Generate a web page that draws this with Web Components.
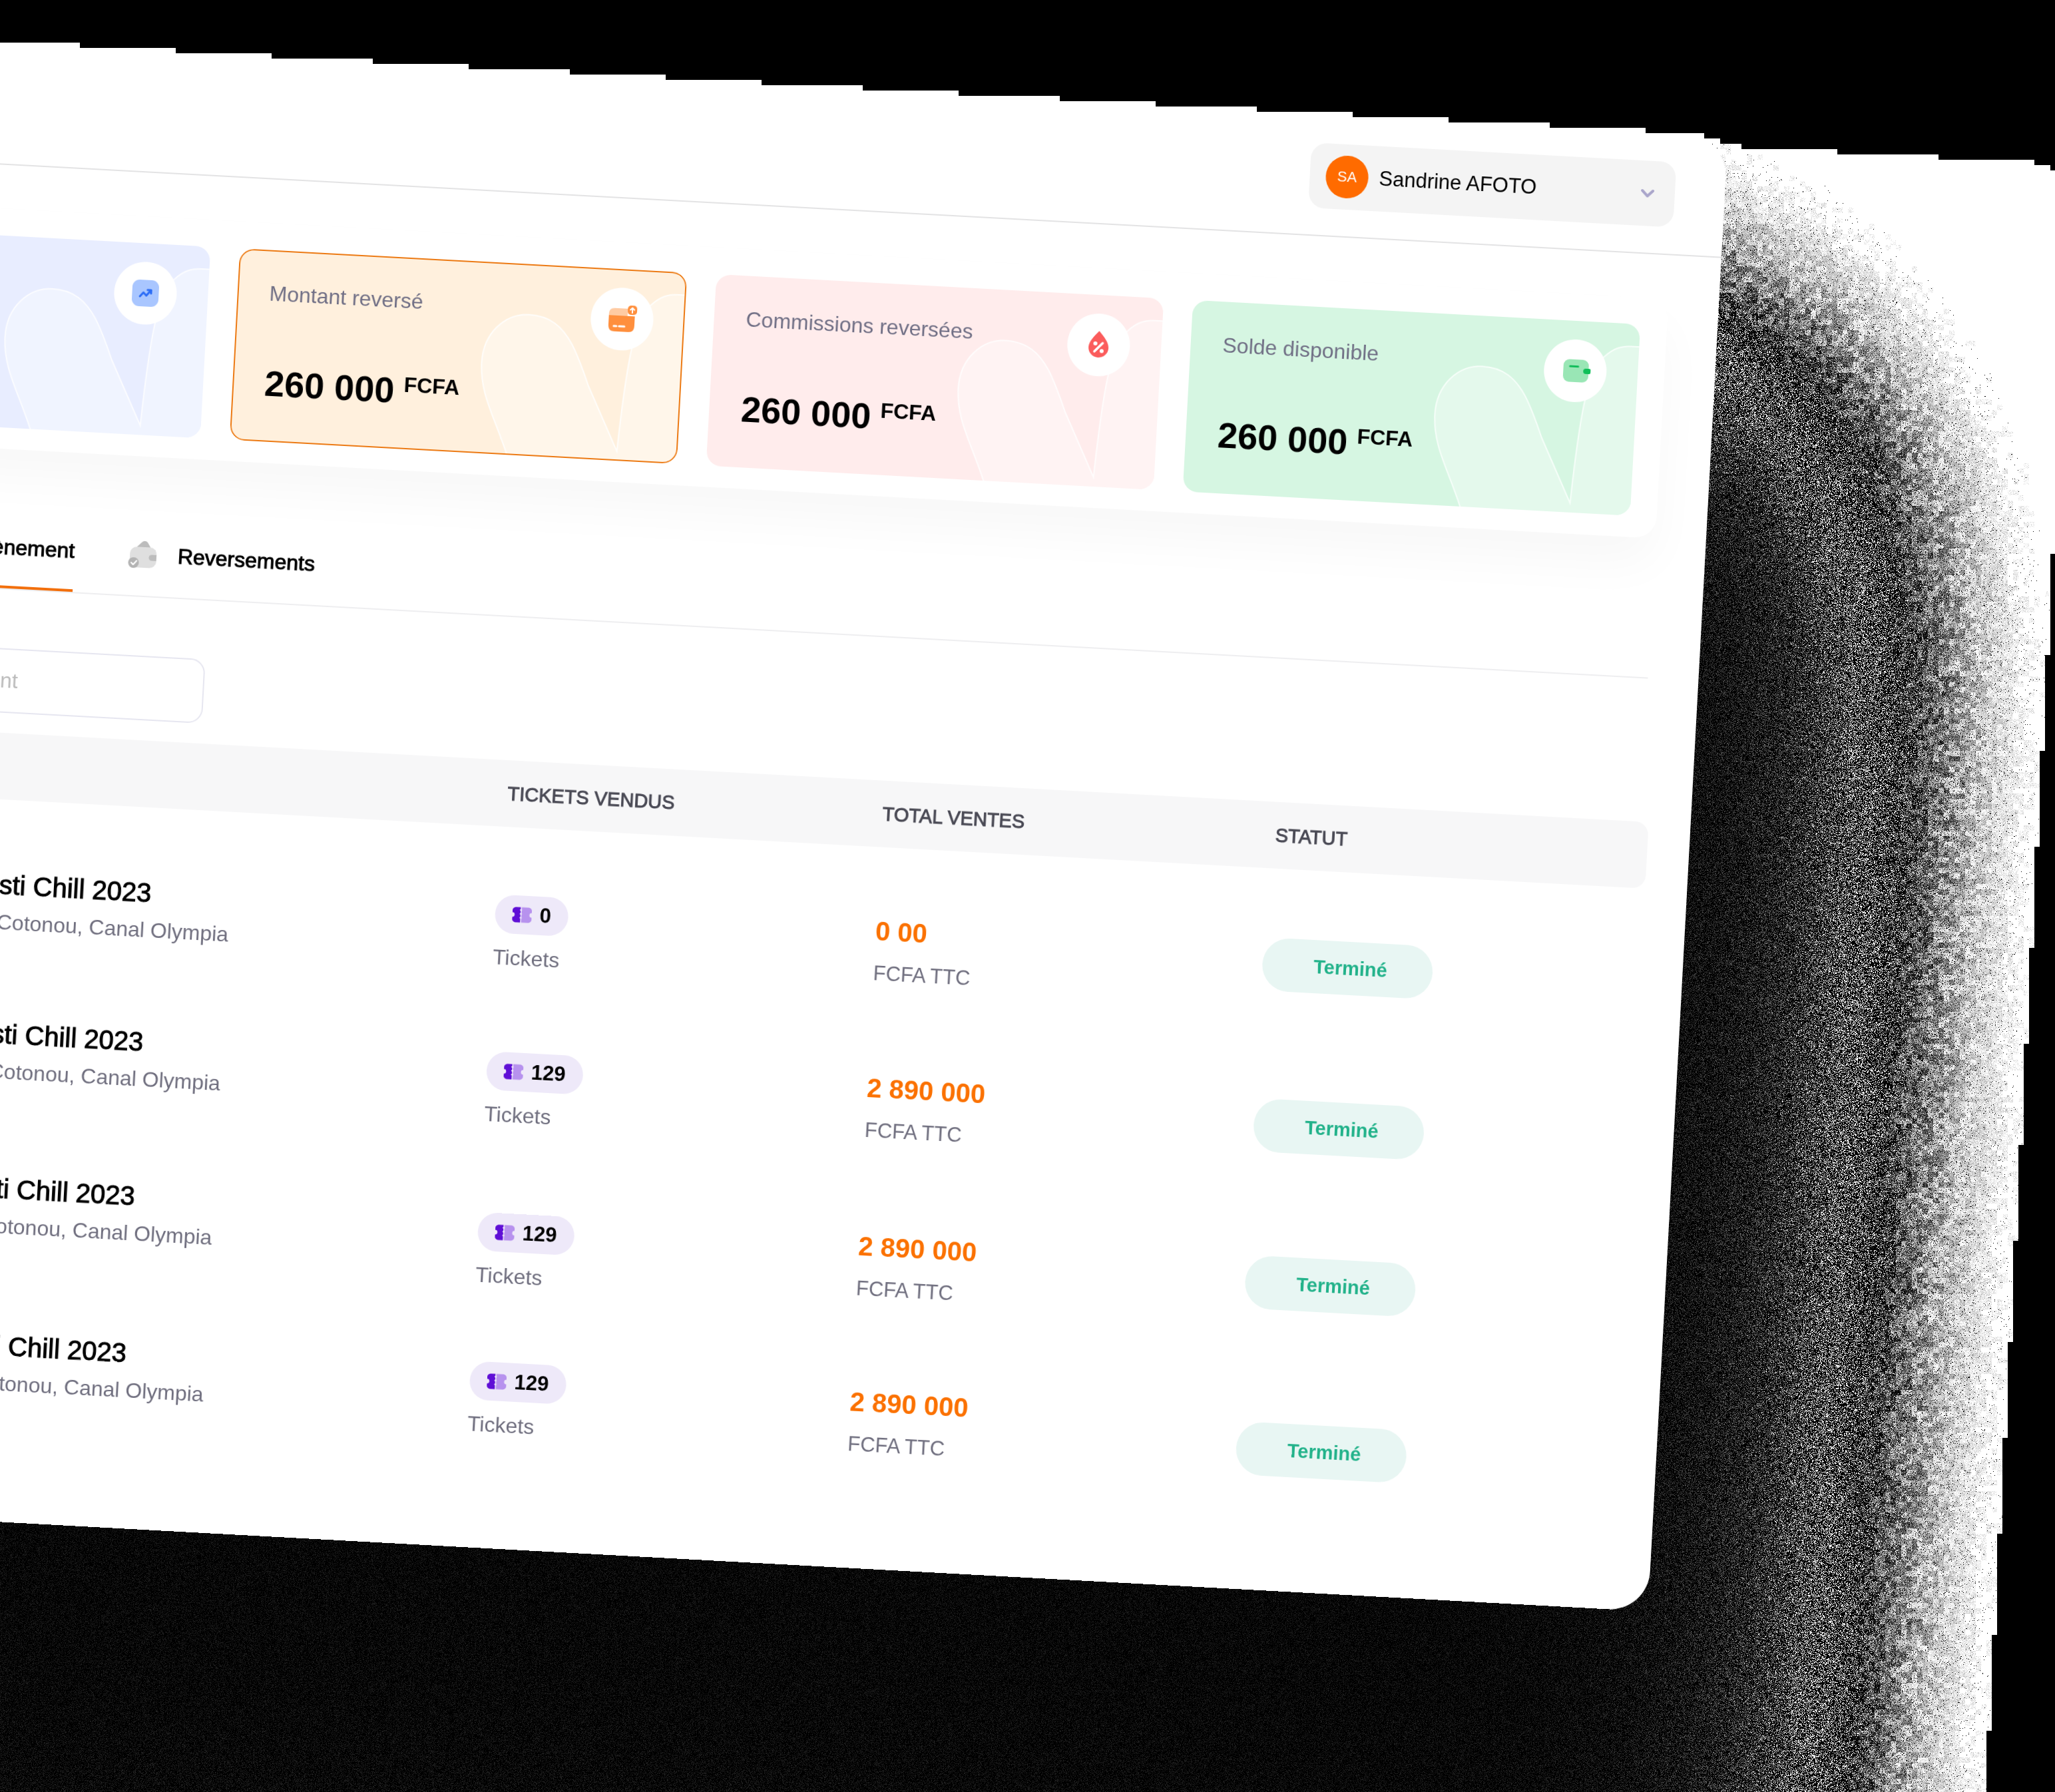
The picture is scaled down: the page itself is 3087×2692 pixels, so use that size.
<!DOCTYPE html>
<html lang="fr">
<head>
<meta charset="utf-8">
<title>Reversements</title>
<style>
  html, body { margin: 0; background: #000; overflow: hidden; }
  body { font-family: "Liberation Sans", Arial, sans-serif; font-size: 32px; line-height: 40px; color: #000; }
</style>
</head>
<body>
<tilted-stage>
  <account-bar slot="header" initials="SA">Sandrine AFOTO</account-bar>
  <stat-board>
    <stat-card tone="blue" icon="trend"><span slot="label">Montant total</span>260 000</stat-card>
    <stat-card tone="orange" icon="card"><span slot="label">Montant reversé</span>260 000</stat-card>
    <stat-card tone="red" icon="drop"><span slot="label">Commissions reversées</span>260 000</stat-card>
    <stat-card tone="green" icon="wallet"><span slot="label">Solde disponible</span>260 000</stat-card>
  </stat-board>
  <tab-bar></tab-bar>
  <search-box></search-box>
  <event-table></event-table>
</tilted-stage>

<script>
const ICONS = {
  trend: `<svg width="46" height="46" viewBox="0 0 46 46"><rect x="3" y="3" width="40" height="40" rx="11" fill="#a9c6ff"/><path d="M15 28 L20 22 L24.500 26.500 L30 19.500 M26 18 L31.500 18 L31.500 23" fill="none" stroke="#2b6cf6" stroke-width="3" stroke-linecap="round" stroke-linejoin="round"/></svg>`,
  card: `<svg width="46" height="46" viewBox="0 0 46 46"><path d="M3 19v-3c0-6 3-9 9-9h19v12z" fill="#ffcba3"/><path d="M3 18h39v14c0 7-3 10-9 10H12c-6 0-9-3-9-10z" fill="#ff8f3d"/><rect x="31" y="2" width="14" height="14" rx="5" fill="#ff8f3d"/><path d="M38 13V6M35 8.500l3-3 3 3" fill="none" stroke="#fff" stroke-width="2" stroke-linecap="round" stroke-linejoin="round"/><path d="M11 34h4M19 34h8" stroke="#fff" stroke-width="3" stroke-linecap="round"/></svg>`,
  drop: `<svg width="46" height="46" viewBox="0 0 46 46"><path d="M23 2C16 10 8 18 8 27a15 15 0 0 0 30 0C38 18 30 10 23 2z" fill="#fb5c5c"/><path d="M17 33L29 20" stroke="#fff" stroke-width="3.500" stroke-linecap="round"/><circle cx="18" cy="21" r="3" fill="#fff"/><circle cx="28" cy="32" r="3" fill="#fff"/></svg>`,
  wallet: `<svg width="46" height="46" viewBox="0 0 46 46"><rect x="5" y="6" width="38" height="34" rx="9" fill="#99e6b5"/><path d="M15 16.500h12" stroke="#12bd5b" stroke-width="3" stroke-linecap="round"/><path d="M39 19h5a2 2 0 0 1 2 2v4a2 2 0 0 1-2 2h-5a4 4 0 0 1 0-8z" fill="#0fbf58"/></svg>`,
  purse: `<svg width="42" height="42" viewBox="0 0 42 42"><path d="M11 11L19 3c3-3 6-3 9 0l5 8z" fill="#bcbcbc"/><rect x="2" y="10" width="40" height="31" rx="10" fill="#dfdfdf"/><path d="M35 21h7v9h-7a4.500 4.500 0 0 1 0-9z" fill="#bdbdbd"/><circle cx="8" cy="34" r="8" fill="#b3b3b3"/><path d="M4.500 34l3 3 5-6" fill="none" stroke="#fff" stroke-width="2" stroke-linecap="round" stroke-linejoin="round"/></svg>`,
  ticket: `<svg width="29" height="24" viewBox="0 0 30 24"><path d="M6 0h6.500v3l-1.500 1.500 1.500 1.500v3l-1.500 1.500L12.500 12v3L11 16.500l1.500 1.500V24H6c-3 0-6-2-6-5v-3.500a3.500 3.500 0 0 0 0-7V5c0-3 3-5 6-5z" fill="#5f0fd6"/><path d="M24 0H14v3l1 1.500-1 1.500v3l1 1.500-1 1.500v3l1 1.500-1 1.500V24h10c3 0 6-2 6-5v-3.500a3.500 3.500 0 0 1 0-7V5c0-3-3-5-6-5z" fill="#b792ee"/></svg>`,
  chevron: `<svg width="24" height="16" viewBox="0 0 24 16"><path d="M4 4l8 8 8-8" fill="none" stroke="#aaa6cb" stroke-width="4" stroke-linecap="round" stroke-linejoin="round"/></svg>`
};

function define(name, render, ready) {
  customElements.define(name, class extends HTMLElement {
    connectedCallback() {
      if (this.shadowRoot) return;
      const root = this.attachShadow({ mode: 'open' });
      root.innerHTML = render(this);
      if (ready) ready(root, this);
    }
  });
}

/* Dithered shadow cast by the tilted panel: its faint alpha is quantised per pixel,
   and blocks of 8 pixels share one tone where it fades away. */
define('grain-shadow', () => `
  <style>:host { display: block; } canvas { display: block; width: 100%; height: 100%; }</style>
  <canvas aria-hidden="true"></canvas>`, root => {
  const cv = root.querySelector('canvas');
  const W = cv.width = innerWidth, H = cv.height = innerHeight;
  const ctx = cv.getContext('2d');
  const img = ctx.createImageData(W, H);
  const px = new Uint32Array(img.data.buffer);
  let s = 20231;
  const rnd = () => { s ^= s << 13; s ^= s >>> 17; s ^= s << 5; return (s >>> 0) / 4294967296; };
  const t = 3.11 * Math.PI / 180, C = Math.cos(t), S = Math.sin(t);
  const edge = W - 484, panelTop = 66, panelBottom = 2283, sigma = 185, sigmaTop = 200;
  const phi = z => {
    const k = 1 / (1 + 0.2316419 * Math.abs(z));
    const q = 0.3989423 * Math.exp(-z * z / 2) * k * (0.3193815 + k * (-0.3565638 + k * (1.781478 + k * (-1.821256 + k * 1.330274))));
    return z > 0 ? 1 - q : q;
  };
  const gray = v => (255 << 24 | v << 16 | v << 8 | v) >>> 0;
  for (let by = 0; by < H; by += 8) for (let bx = 0; bx < W; bx += 8) {
    const u = bx * C + by * S, vb = (by + 8) * C - bx * S;
    const inPanel = u < edge - 11 && vb > (u < edge - 36 ? 65.75 : u < edge - 19 ? 72 : 80);
    const inShadow = vb > (u > edge + 485 ? 92 : 82.05) && u < edge + 517.5;
    let tone = 255, a = 0;
    if (inShadow) {
      const um = u + 4, vm = vb - 4;
      a = 12.8 * phi((edge - um) / sigma) * phi((vm - panelTop - 539) / sigmaTop) * phi((panelBottom + 539 - vm) / sigma);
      a = Math.max(0, a - 0.022);
      const f = a / 0.58;
      tone = Math.max(8, Math.min(254, 255 * (1 - f) + (rnd() - 0.55) * 150 * Math.min(1, f * 3)));
      if (f > 1.3) tone = 0;
      if (rnd() > a * 22) tone = 255;
    }
    const on = inPanel || inShadow;
    for (let y = by; y < by + 8 && y < H; y++) for (let x = bx; x < bx + 8 && x < W; x++) {
      let v = 0;
      if (on) {
        const n = Math.floor(a * (0.6 + 0.8 * rnd()) + rnd());
        if (n > 0) v = rnd() < 0.38 ? 255 / n : 0;
        else v = tone === 255 ? 255 : Math.max(0, Math.min(255, tone + (rnd() - 0.5) * 80));
      }
      px[y * W + x] = gray(v | 0);
    }
  }
  ctx.putImageData(img, 0, 0);
});

define('tilted-stage', () => `
  <style>
    :host { display: grid; height: 100vh; overflow: hidden; }
    grain-shadow, .plane { grid-area: 1 / 1; min-width: 0; min-height: 0; }
    .plane { padding-top: 66px; transform: rotate(3.105deg); transform-origin: 0 0; }
    .panel { width: calc(100vw - 87px); margin-left: -397px; background: #fff; border-radius: 60px; }
    main { padding: 66px 76px 140px 20px; }
  </style>
  <grain-shadow></grain-shadow>
  <div class="plane"><div class="panel">
    <slot name="header"></slot>
    <main><slot></slot></main>
  </div></div>`);

define('account-bar', el => `
  <style>
    :host { display: flex; justify-content: flex-end; align-items: center; height: 179px; padding-right: 75px; border-bottom: 2px solid #e3e3e4; }
    button { display: flex; align-items: center; gap: 16px; width: 549px; height: 98px; padding: 0 29px 0 24px; border: 0; border-radius: 24px; background: #f4f4f4; font: 31px/40px "Liberation Sans", Arial, sans-serif; color: #000; text-align: left; }
    .avatar { display: grid; place-items: center; width: 64px; height: 64px; border-radius: 50%; background: #ff6b00; color: #fff; font-size: 22px; }
    .name { flex: 1; }
    svg { display: block; }
  </style>
  <button type="button" aria-haspopup="menu"><span class="avatar">${el.getAttribute('initials')}</span><span class="name"><slot></slot></span>${ICONS.chevron}</button>`);

define('stat-board', () => `
  <style>
    :host { display: grid; grid-template-columns: repeat(4, minmax(0, 1fr)); gap: 44px; padding: 40px 40px 32px; border-radius: 32px; background: #fff; box-shadow: 0 40px 72px rgba(0, 0, 0, .03); }
  </style>
  <slot></slot>`);

const TONES = {
  blue: ['#e8edff', '#f0f4ff', '#fbfcff', 'transparent'],
  orange: ['#fff0dd', '#fff6ea', '#fffdfa', '#ec7a14'],
  red: ['#ffecec', '#fff3f3', '#fffcfc', 'transparent'],
  green: ['#d6f6e2', '#e4f9ec', '#f6fef9', 'transparent']
};
define('stat-card', el => {
  const [bg, wave, line, border] = TONES[el.getAttribute('tone')];
  return `
  <style>
    :host { display: grid; height: 288px; border-radius: 22px; overflow: hidden; background: ${bg}; }
    .wave, .body, .ring { grid-area: 1 / 1; }
    .wave { display: block; justify-self: end; width: 310px; height: 288px; }
    .ring { border: 2px solid ${border}; border-radius: 22px; }
    .body { display: flex; justify-content: space-between; padding: 28px 47px 0 48px; }
    .text { display: flex; flex-direction: column; gap: 85px; padding-top: 17px; }
    .label { color: #706f85; font-size: 32px; line-height: 40px; white-space: nowrap; }
    .amount { font-weight: 700; font-size: 54px; line-height: 60px; white-space: nowrap; }
    sup { margin-left: 14px; font-size: 32px; line-height: 0; vertical-align: 17px; }
    .badge { display: grid; place-items: center; width: 94px; height: 94px; border-radius: 50%; background: #fff; }
    svg { display: block; }
  </style>
  <svg class="wave" viewBox="363 0 310 288" aria-hidden="true"><path d="M418 290C396 232 372 200 372 152C372 106 404 76 439 76C471 76 490 91 506 117C516 134 526 158 534 178L582 274C585 220 589 160 596 118C602 84 609 62 622 51C634 39 645 34 662 34H700V310H426Z" fill="${wave}" stroke="${line}" stroke-width="2"/></svg>
  <div class="ring"></div>
  <div class="body">
    <div class="text"><div class="label"><slot name="label"></slot></div><div class="amount"><slot></slot><sup>FCFA</sup></div></div>
    <div class="badge">${ICONS[el.getAttribute('icon')]}</div>
  </div>`;
});

define('tab-bar', () => `
  <style>
    :host { display: block; margin-top: 106px; }
    nav { display: flex; gap: 81px; padding-left: 298px; border-bottom: 2px solid #eeeef0; }
    button { display: flex; align-items: center; gap: 32px; padding: 20px 0 37px; border: 0; border-bottom: 4px solid transparent; background: none; font: 32px/40px "Liberation Sans", Arial, sans-serif; color: #000; -webkit-text-stroke: 1px #000; }
    button[aria-current] { border-bottom-color: #f26f0c; }
    svg { display: block; }
  </style>
  <nav>
    <button type="button" aria-current="page">${ICONS.purse}Évènement</button>
    <button type="button">${ICONS.purse}Reversements</button>
  </nav>`);

define('search-box', () => `
  <style>
    :host { display: block; margin-top: 88px; }
    input { display: block; box-sizing: border-box; width: 739px; height: 97px; padding: 0 24px 0 80px; border: 2px solid #e6e6f0; border-radius: 22px; background: #fff; font: 32px/40px "Liberation Sans", Arial, sans-serif; color: #000; outline: 0; }
    input::placeholder { color: #bbb; opacity: 1; }
  </style>
  <input type="search" aria-label="Rechercher un évènement" placeholder="Rechercher un évènement">`);

const EVENTS = [
  { sold: '0', total: '0 00' },
  { sold: '129', total: '2 890 000' },
  { sold: '129', total: '2 890 000' },
  { sold: '129', total: '2 890 000' }
];
define('event-table', () => `
  <style>
    :host { display: block; margin: 30px -13px 0 0; }
    table { width: 100%; table-layout: fixed; border-collapse: separate; border-spacing: 0; }
    col.sold { width: 564px; } col.total { width: 591px; } col.status { width: 568px; }
    th { height: 100px; padding: 0 0 0 9px; background: #f7f7f8; color: #4a4a55; font-size: 29px; font-weight: 400; line-height: 40px; text-align: left; -webkit-text-stroke: 1px #4a4a55; }
    th:first-child { padding-left: 120px; }
    th:last-child { border-radius: 0 20px 20px 0; }
    tbody tr { height: 236px; }
    td { padding: 0; vertical-align: top; }
    .event { padding: 92px 0 0 401px; }
    .sold { padding-top: 102px; }
    .total { padding: 102px 0 0 8px; }
    .status { padding-top: 110px; }
    tr:first-child .event { padding-top: 104px; }
    tr:nth-child(n+3) .event { padding-top: 88px; }
    tr:nth-child(3) .sold { padding-top: 108px; }
    tr:last-child .sold { padding-top: 96px; }
    tr:nth-child(3) .total { padding-top: 104px; }
    tr:first-child .status { padding-top: 104px; }
    tr:last-child .status { padding-top: 124px; }
    .name { font-size: 40px; line-height: 48px; -webkit-text-stroke: 1px #000; }
    .place, .unit, .note { color: #706f7f; line-height: 40px; }
    .place { margin-top: 12px; padding-left: 46px; font-size: 32px; }
    .note { margin-top: 16px; font-size: 32px; }
    .unit { margin-top: 20px; font-size: 31px; }
    .sum { color: #fb7100; font-size: 40px; font-weight: 700; line-height: 48px; }
    .pill { display: inline-flex; align-items: center; gap: 12px; height: 58px; padding: 0 26px; border-radius: 29px; background: #eee9f9; font-size: 31px; font-weight: 700; line-height: 40px; vertical-align: top; }
    .state { display: inline-flex; align-items: center; height: 80px; padding: 0 68px 0 77px; border-radius: 40px; background: #e8f6f3; color: #22b28a; font-size: 29px; font-weight: 700; line-height: 40px; vertical-align: top; }
    svg { display: block; }
  </style>
  <table>
    <colgroup><col><col class="sold"><col class="total"><col class="status"></colgroup>
    <thead><tr><th scope="col">ÉVÈNEMENT</th><th scope="col">TICKETS VENDUS</th><th scope="col">TOTAL VENTES</th><th scope="col">STATUT</th></tr></thead>
    <tbody>${EVENTS.map(e => `<tr>
      <td class="event"><div class="name">Festi Chill 2023</div><div class="place">Cotonou, Canal Olympia</div></td>
      <td class="sold"><span class="pill">${ICONS.ticket}${e.sold}</span><div class="note">Tickets</div></td>
      <td class="total"><div class="sum">${e.total}</div><div class="unit">FCFA TTC</div></td>
      <td class="status"><span class="state">Terminé</span></td></tr>`).join('')}</tbody>
  </table>`);
</script>
</body>
</html>
